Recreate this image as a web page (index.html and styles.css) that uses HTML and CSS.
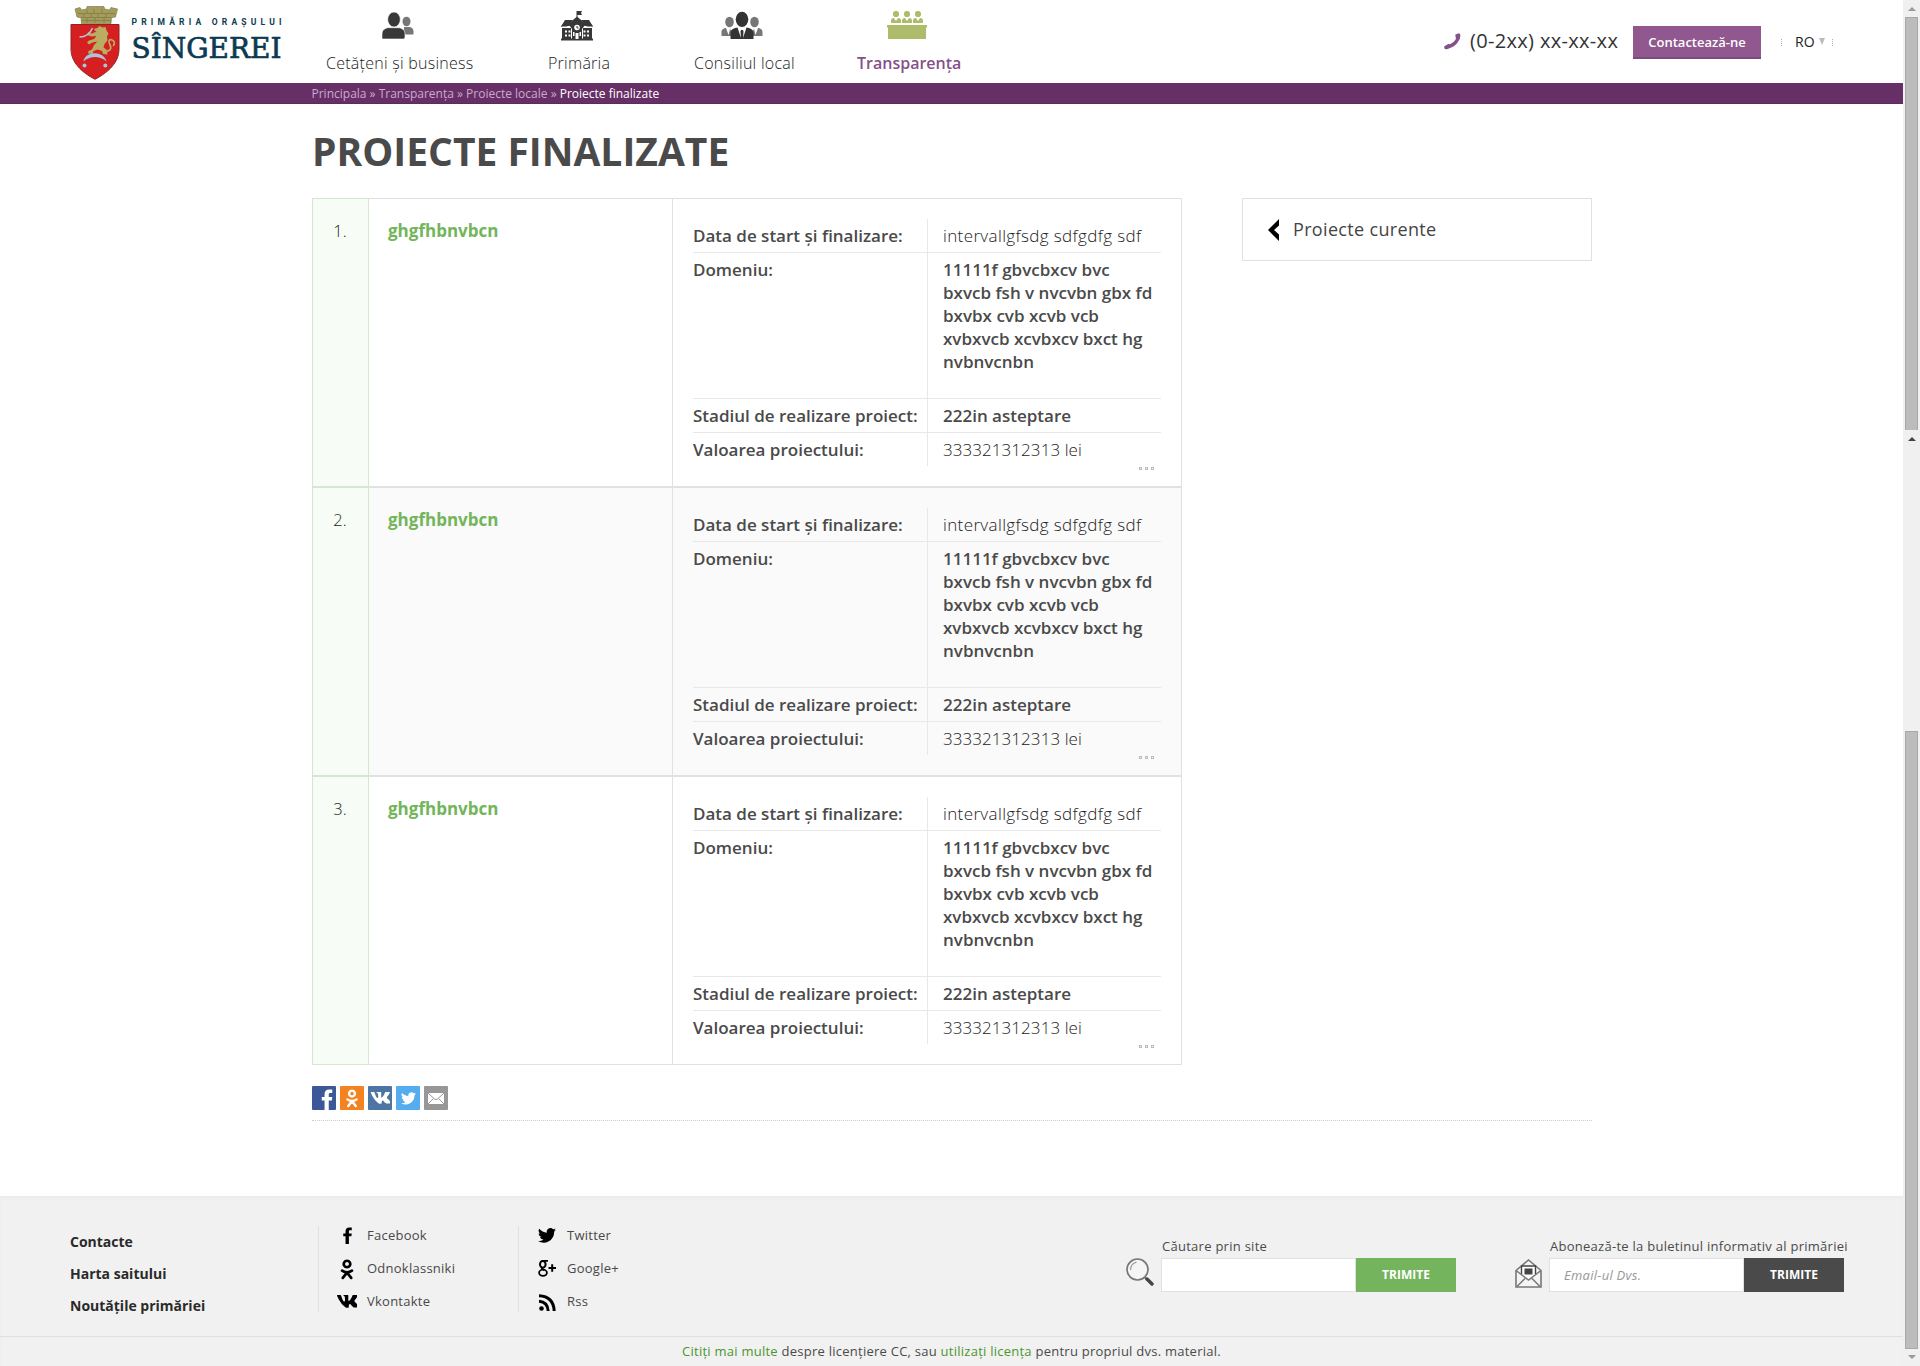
FILE: index.html
```html
<!DOCTYPE html>
<html lang="ro">
<head>
<meta charset="utf-8">
<title>Proiecte finalizate</title>
<link rel="stylesheet" href="styles.css">
<script src="main.js" defer></script>
</head>
<body>
<svg class="defs" width="0" height="0">
  <symbol id="i-fb" viewBox="0 0 12 24"><path d="M3.2 24V13.2H0V9.2h3.200V6.200C3.200 2.600 5 .6 8.600.6H12v4H9.700C8.300 4.600 8 5.200 8 6.500v2.700h4l-.5 4H8V24z"/></symbol>
  <symbol id="i-ok" viewBox="0 0 14 22"><path fill="none" stroke="currentColor" stroke-width="2.800" stroke-linecap="round" d="M7 1.800a3.400 3.400 0 1 0 .01 0zM1.800 12.200q5.200 3.400 10.400 0M7 14.200L2.600 19.800M7 14.200l4.400 5.600"/></symbol>
  <symbol id="i-vk" viewBox="0 0 20 13"><path d="M9.700 12.800h1.300s.5-.1.600-.4c.2-.3.200-1 .2-1s0-2 .9-2.300c.9-.3 2 2 3.300 2.900.9.600 1.600.5 1.600.5h3.100s1.700-.2.800-1.600c-.1-.1-.5-1-2.600-3-2.200-2-1.900-1.700.7-5.200C21.200.6 20.800 0 19.900 0h-3.600s-.3 0-.5.100c-.2.100-.3.400-.3.400s-.6 1.500-1.300 2.800c-1.600 2.700-2.200 2.800-2.500 2.600-.6-.4-.4-1.600-.4-2.400C11.300.8 11.700 0 10.500-.2 8.800-.5 6.700-.3 6 .4c-.4.300 1.200.3 1.500.9.500.8.900 4.900 0 5.200C6.700 6.900 5.500 5.300 4.100.5 4 .2 3.700 0 3.300 0H.4S-.2 0 .1.800c.1.500 2.500 5.700 5.200 8.600 2.400 2.500 4.400 3.400 4.400 3.400z"/></symbol>
  <symbol id="i-tw" viewBox="0 0 24 20"><path d="M24 2.400a10 10 0 0 1-2.800.8A5 5 0 0 0 23.300.5a10 10 0 0 1-3.100 1.200 4.900 4.900 0 0 0-8.400 4.500A14 14 0 0 1 1.700 1a4.900 4.900 0 0 0 1.500 6.600 5 5 0 0 1-2.200-.6 4.900 4.900 0 0 0 3.900 4.900 5 5 0 0 1-2.200.1 4.900 4.900 0 0 0 4.600 3.400A10 10 0 0 1 0 17.400 14 14 0 0 0 21.500 5z"/></symbol>
</svg>
<div class="page">
  <header class="header">
    <a class="logo">
      <svg width="222" height="80" viewBox="0 0 222 80">
        <path fill="#a39c5c" stroke="#77713d" stroke-width=".6" d="M5 9l5-1.500 1.500 2.500 5-1 .5-2.500h17l.5 2.500 5 1L41 7.500 47.500 9l-2 8-4 .8-.5 6H11.500l-.5-6-4-.8z"/>
        <path stroke="#857f48" stroke-width=".9" fill="none" d="M8 13.500h37M11 17.500h30M12 20.500h29M17 10v3M24 9v4M32 9v4M14 14v3M21 14v3M28 14v3M36 14v3M17 18v5M25 18v5M34 18v5"/>
        <path fill="#d61f20" stroke="#8f2523" stroke-width="1" d="M1 24.500h48V49C49 62 39 72 25 79.300 11 72 1 62 1 49z"/>
        <path fill="#b9ad63" d="M24.500 28.500l3-.5 2-2 3 1.500 3-.5 1 3.500 2 3-1.500 3 .5 4-3 3.500-1 3.500 3.500 2.500.5 4.500-4.500-.5-1-3-4.500-1.500-4 1.500-1 3-4.500-.5.500-2.500 3.500-1.500 2-4.500 3.500-3.500-5 1-3.500 2-2-2 2-2 5-1.500 2.500-3-5 .5-4.500-1.500 1-2.500 4 1 4.500-2-2-1z"/>
        <path fill="none" stroke="#b9ad63" stroke-width="1.700" d="M33 51c7 1 9-2 7-6s-1-6 2-5 3 4 1 6"/>
        <path fill="none" stroke="#b7c7d9" stroke-width="1.600" d="M9.500 37c6 0 10.500-3 13-9"/>
        <path fill="#a9c3dc" d="M13.500 61.500C15 50.500 34 50.500 36.500 61.500c-6-6-17-6-23 0z"/>
        <circle cx="14.500" cy="65.500" r="2" fill="#a9c3dc"/><circle cx="35.300" cy="65.500" r="2" fill="#a9c3dc"/>
        <text class="logo-top" x="61.500" y="25" textLength="150" lengthAdjust="spacing">PRIMĂRIA ORAȘULUI</text>
        <text class="logo-main" x="61.500" y="58" textLength="150" lengthAdjust="spacingAndGlyphs">SÎNGEREI</text>
      </svg>
    </a>
    <nav class="nav">
      <a class="nav-item">
        <svg width="32" height="32" viewBox="0 0 32 32"><g fill="#777"><ellipse cx="24.500" cy="10.500" rx="4" ry="4.800"/><path d="M22 23.500h9.500v-3c0-3-2-4.500-4.500-4.500h-5z"/></g><g fill="#383838" stroke="#fff" stroke-width=".6"><path d="M0 28v-5c0-4 3-6.300 7-6.300h9c4 0 7 2.300 7 6.300v3c0 1.500-1 2-2 2z"/><ellipse cx="12" cy="8.500" rx="6.300" ry="7.500"/></g></svg>
        <span>Cetățeni și business</span>
      </a>
      <a class="nav-item">
        <svg width="32" height="32" viewBox="0 0 32 32"><g fill="#383838"><path d="M0 27.500h32V29.500H0zM1 17h9v11H1zM22 17h9v11h-9zM11 14h10v14H11zM4 9h6l-9 6.500H0zM28 9h-6l9 6.500h1zM15.500 0h1v6h-1zM16 0h5l-1 2 1 2h-5z"/><path d="M5.500 9H12l-6 6.500H0zM26.500 9H20l6 6.500h6z"/><path d="M16 5.500L27 15h-3l-8-7-8 7H5zM8 14l8-7 8 7-3 4H11z"/></g><circle cx="16" cy="16.500" r="2.800" fill="#fff"/><path stroke="#383838" fill="none" d="M16 15v2h1.500"/><path fill="#fff" d="M4 19.500h2v2H4zM7.500 19.500h2v2h-2zM4 23.500h2v2H4zM7.500 23.500h2v2h-2zM22.500 19.500h2v2h-2zM26 19.500h2v2h-2zM22.500 23.500h2v2h-2zM26 23.500h2v2h-2zM12 21h1.500v4H12zM18.500 21H20v4h-1.500zM14.500 22h3v6h-3z"/></svg>
        <span>Primăria</span>
      </a>
      <a class="nav-item">
        <svg width="42" height="32" viewBox="0 0 42 32"><g fill="#777"><ellipse cx="8.500" cy="11" rx="4.300" ry="5.300"/><ellipse cx="33.500" cy="11" rx="4.300" ry="5.300"/><path d="M.5 25v-4c0-3 3-4 4.500-4l2.500 7L9 18l2 3v4zM41.500 25v-4c0-3-3-4-4.500-4l-2.500 7L33 18l-2 3v4z"/></g><g fill="#333"><ellipse cx="21" cy="8.300" rx="6.300" ry="7.600"/><path d="M9.500 28v-6c0-4 4-5 7-5.500L20 27l-.5-6.500.5-1.500h2l.5 1.500L22 27l3.500-10.500c3 .5 7 1.500 7 5.500v6z"/></g></svg>
        <span>Consiliul local</span>
      </a>
      <a class="nav-item active">
        <svg width="40" height="32" viewBox="0 0 40 32"><g fill="#adbc6b"><circle cx="9" cy="3" r="3.100"/><circle cx="20" cy="3" r="3.100"/><circle cx="31" cy="3" r="3.100"/><path d="M4 12V9.500q0-2.500 3-2.500l2 3 2-3q3 0 3 2.500V12zM15 12V9.500q0-2.500 3-2.500l2 3 2-3q3 0 3 2.500V12zM26 12V9.500q0-2.500 3-2.500l2 3 2-3q3 0 3 2.500V12zM0 14h40v2.500h-1V28H1V16.500H0z"/></g></svg>
        <span>Transparența</span>
      </a>
    </nav>
    <div class="tools">
      <svg width="17" height="17" viewBox="0 0 17 17"><path d="M14.500 2.500C14.200 8 9.500 13.200 2.500 13.700" fill="none" stroke="#85518a" stroke-width="3.400"/><path d="M11.300 1.500L15 .3q1.700.5 1.300 2.500L15.800 6.200l-4-.8zM.3 13.300l4.800-2.500 1.500 4L3 16.200q-2 .5-2.700-1z" fill="#85518a"/></svg>
      <span class="phone">(0-2xx) xx-xx-xx</span>
      <a class="contact">Contactează-ne</a>
      <div class="lang"><span>RO</span><i></i></div>
    </div>
  </header>
  <div class="crumbs"><a>Principala</a> » <a>Transparența</a> » <a>Proiecte locale</a> » <b>Proiecte finalizate</b></div>
  <main class="main">
    <h1>Proiecte finalizate</h1>
    <div class="cols">
      <div class="projects" id="projects"></div>
      <aside class="side"><svg width="11" height="22" viewBox="0 0 11 22"><path d="M11 0v6.500L6 11l5 4.500V22L0 11z"/></svg><span>Proiecte curente</span></aside>
    </div>
    <div class="share">
      <a class="sh fb"><svg width="12" height="21"><use href="#i-fb"/></svg></a>
      <a class="sh ok"><svg width="12" height="19"><use href="#i-ok"/></svg></a>
      <a class="sh vk"><svg width="20" height="12"><use href="#i-vk"/></svg></a>
      <a class="sh tw"><svg width="15" height="13"><use href="#i-tw"/></svg></a>
      <a class="sh ml"><svg width="16" height="11" viewBox="0 0 16 11"><path fill="#fff" d="M0 0h16v11H0z"/><path fill="none" stroke="#979797" d="M0 0l6.500 6q1.500 1 3 0L16 0M0 11l5.500-5.500M16 11l-5.500-5.500"/></svg></a>
    </div>
  </main>
  <footer class="footer">
    <div class="foot-main">
      <div class="links"><a>Contacte</a><a>Harta saitului</a><a>Noutățile primăriei</a></div>
      <div class="social">
        <a><svg class="drop-1" width="9" height="17"><use href="#i-fb"/></svg><span>Facebook</span></a>
        <a><svg width="14" height="21"><use href="#i-ok"/></svg><span>Odnoklassniki</span></a>
        <a><svg class="drop-3" width="20" height="13"><use href="#i-vk"/></svg><span>Vkontakte</span></a>
      </div>
      <div class="social">
        <a><svg class="drop-2" width="18" height="15"><use href="#i-tw"/></svg><span>Twitter</span></a>
        <a><svg class="drop-1" width="18" height="17" viewBox="0 0 18 17"><g fill="none" stroke="#000"><ellipse cx="4.800" cy="4.300" rx="2.800" ry="3.400" stroke-width="2"/><ellipse cx="5" cy="12.800" rx="3.900" ry="3.100" stroke-width="1.800"/><path stroke-width="1.800" d="M5 .9h5M4 7.300c-1 1.200 1 2 2.500 3"/><path stroke-width="2" d="M10.500 8H18M14.200 4.200v7.600"/></g></svg><span>Google+</span></a>
        <a><svg class="drop-2" width="17" height="17" viewBox="0 0 17 17"><circle cx="2.500" cy="14.500" r="2.300"/><path fill="none" stroke="#000" stroke-width="3" d="M0 7.200q8.500.5 9.200 9.800M0 1.800Q14.500 2.500 15.200 17"/></svg><span>Rss</span></a>
      </div>
      <div class="field search">
        <svg width="28" height="29" viewBox="0 0 28 29"><circle cx="11.500" cy="11.500" r="10.500" fill="#f5f5f5" stroke="#777" stroke-width="1.700"/><path d="M4.500 12q0-6 6-8" fill="none" stroke="#999" stroke-width="1.200"/><path d="M19 19.500l2 2" stroke="#777" stroke-width="2"/><path d="M21 21l5 5" stroke="#444" stroke-width="3.400" stroke-linecap="round"/></svg>
        <div><label>Căutare prin site</label><div class="row"><span class="box"></span><span class="btn">TRIMITE</span></div></div>
      </div>
      <div class="field mail">
        <svg width="27" height="31" viewBox="0 0 27 31"><path d="M1 12.500L13.500 2 26 12.500V29H1z" fill="#f4f4f4" stroke="#777" stroke-width="1.600"/><path d="M6 8h15v8.500l-7.500 6-7.500-6z" fill="#fff"/><path d="M6.500 16V8h14v8" fill="none" stroke="#444" stroke-width="1.400"/><path d="M1 12.500l12.500 9.500L26 12.500M2 28.500l8-8M25 28.500l-8-8" fill="none" stroke="#777" stroke-width="1.500"/><path d="M9.500 10.500h8v6h-8z" fill="#444"/></svg>
        <div><label>Abonează-te la buletinul informativ al primăriei</label><div class="row"><span class="box">Email-ul Dvs.</span><span class="btn dark">TRIMITE</span></div></div>
      </div>
    </div>
    <div class="legal"><p><a>Citiți mai multe</a> despre licențiere CC, sau <a>utilizați licența</a> pentru propriul dvs. material.</p></div>
  </footer>
</div>
<div class="scrollbar">
  <i class="up"></i><div class="thumb first"></div><i class="up dark"></i><div class="thumb second"></div><i class="down"></i>
</div>
</body>
</html>
```
FILE: main.js
```js
const fields = [
  ["Data de start și finalizare:", "intervallgfsdg sdfgdfg sdf", "period"],
  ["Domeniu:", "11111f gbvcbxcv bvc bxvcb fsh v nvcvbn gbx fd bxvbx cvb xcvb vcb xvbxvcb xcvbxcv bxct hg nvbnvcnbn", "strong long"],
  ["Stadiul de realizare proiect:", "222in asteptare", "strong"],
  ["Valoarea proiectului:", "333321312313 lei", ""]
];
const rows = fields.map(([k, v, c]) => `<div class="line"><dt>${k}</dt><dd class="${c}">${v}</dd></div>`).join("");
document.getElementById("projects").innerHTML = [1, 2, 3].map(n =>
  `<article class="project"><div class="num">${n}.</div><h2>ghgfhbnvbcn</h2><div class="info"><dl>${rows}</dl><div class="more"><i></i><i></i><i></i></div></div></article>`
).join("");
```
FILE: styles.css
```css
* { box-sizing: border-box; }
body { margin: 0; display: flex; height: 1366px; overflow: hidden; font-family: "Open Sans", "Noto Sans", sans-serif; font-size: 16px; color: #4a4a4a; background: #fff; }
h1, h2, p, dl, dd { margin: 0; }
.defs { position: absolute; }
svg { flex: none; display: block; }
.page { width: 1903px; display: flex; flex-direction: column; }

.header { height: 83px; display: flex; padding-left: 70px; }
.logo { width: 256px; }
.logo svg { overflow: visible; }
.logo-top { font: 700 8.500px Roboto, sans-serif; fill: #0b3a52; }
.logo-main { font: 28.500px "DejaVu Serif", serif; fill: #0b3a52; stroke: #0b3a52; stroke-width: .7px; }
.nav { display: grid; grid-template-columns: 222px 146px 163px 103px; padding-top: 11px; width: 1118px; }
.nav-item { justify-self: start; display: flex; flex-direction: column; align-items: center; font-weight: 300; line-height: 22px; white-space: nowrap; letter-spacing: .26px; color: #1c1c1c; }
.nav-item svg { position: relative; left: -2px; }
.nav-item span { margin-top: 9px; }
.nav-item.active { font-weight: 600; color: #85518a; letter-spacing: 0; }
.tools { display: flex; align-items: flex-start; white-space: nowrap; }
.tools svg { margin-top: 33px; }
.phone { font-size: 20px; line-height: 28px; width: 163px; margin: 27px 0 0 9px; letter-spacing: .33px; color: #333; }
.contact { width: 128px; height: 33px; margin-top: 26px; background: #90588f; border-bottom: 2px solid #7d4a80; color: #fff; font-weight: 600; font-size: 13px; line-height: 32px; text-align: center; }
.lang { display: flex; align-items: center; margin: 31px 0 0 20px; height: 20px; width: 52px; padding-left: 14px; font-size: 14px; color: #222; background: repeating-linear-gradient(#aaa 0 1px, transparent 1px 2px) 0 8px / 1px 7px no-repeat, repeating-linear-gradient(#aaa 0 1px, transparent 1px 2px) 51px 8px / 1px 7px no-repeat; }
.lang i { margin-left: 4px; border: 3.500px solid transparent; border-top: 7px solid #bbb; border-bottom: 0; }
.crumbs { height: 21px; background: #662f66; border-bottom: 1px solid #5c2a5c; padding-left: 311.500px; font-size: 12px; line-height: 21px; color: #cda9cf; }
.crumbs b { font-weight: 400; color: #fff; }

.main { width: 1280px; margin-left: 312px; height: 1092px; }
h1 { font-size: 39px; line-height: 54px; font-weight: 700; text-transform: uppercase; padding-top: 20px; height: 94px; }
.cols { display: flex; justify-content: space-between; align-items: flex-start; }
.projects { width: 870px; }
.project { display: grid; grid-template-columns: 57px 303px 510px; height: 289px; }
.num { background: #f7fdf6; border: 1px solid #d3e8ce; padding-top: 20px; text-align: center; font-size: 16.500px; font-weight: 300; line-height: 24px; padding-right: 1px; color: #222; }
.project h2 { border: solid #e1e1e1; border-width: 1px 0; padding: 20px 19px; font-size: 17px; line-height: 24px; font-weight: 700; color: #72b55a; }
.info { border: 1px solid #e1e1e1; padding: 20px 20px 0; }
.project:nth-child(even) h2, .project:nth-child(even) .info { background: #fafafa; }
.line { display: flex; border-bottom: 1px solid #e8e8e8; font-size: 17px; line-height: 23px; white-space: nowrap; }
.line:last-child { border: 0; }
dt { width: 234px; padding: 5px 0; font-weight: 600; }
dd { width: 234px; padding: 5px 4px 5px 15px; border-left: 1px solid #e8e8e8; white-space: normal; font-weight: 300; color: #222; letter-spacing: .06px; }
dd.strong { font-weight: 600; color: #4a4a4a; letter-spacing: 0; }
dd.long { padding-bottom: 25px; }
dd.period { letter-spacing: .37px; white-space: nowrap; }
.more { display: flex; justify-content: flex-end; gap: 3px; padding: 1px 7px 0 0; }
.more i { width: 3px; height: 3px; border: 1px solid #bbb; }
.side { width: 350px; height: 63px; border: 1px solid #e1e1e1; display: flex; align-items: center; gap: 14px; padding-left: 25px; font-size: 18px; letter-spacing: .33px; color: #444; }
.side span { margin-top: -1px; }
.share { display: flex; gap: 4px; padding-top: 21px; height: 56px; border-bottom: 1px dotted #ccc; }
.sh { width: 24px; height: 24px; border-radius: 1px; display: flex; align-items: center; justify-content: center; fill: #fff; color: #fff; }
.fb { background: #3b5998; align-items: flex-end; justify-content: flex-end; padding-right: 3px; }
.ok { background: #f58220; }
.vk { background: #4d75a3; }
.tw { background: #55acee; }
.ml { background: #979797; }

.footer { height: 170px; background: #f1f1f1; box-shadow: inset 0 2px 2px #ebebeb; }
.foot-main { height: 140px; display: flex; padding: 30px 0 0 70px; }
.links { width: 248px; display: flex; flex-direction: column; font-size: 14px; font-weight: 700; line-height: 32px; color: #2a2a2a; }
.social { width: 200px; height: 86px; border-left: 1px solid #e0e0e0; font-size: 13px; color: #555; }
.social a { display: grid; grid-template-columns: 56px auto; height: 33px; color: #000; align-items: start; justify-content: start; }
.social svg { margin: 0 auto; }
.social .drop-1 { margin-top: 1px; }
.social .drop-2 { margin-top: 2px; }
.social .drop-3 { margin-top: 3px; }
.social span { line-height: 18px; color: #484848; margin-left: -8px; letter-spacing: .25px; }
.field { display: flex; white-space: nowrap; font-size: 13px; gap: 7px; letter-spacing: .27px; }
.search { margin-left: 408px; width: 389px; }
.field > svg { margin-top: 32px; }
label { display: block; line-height: 18px; margin: 11px 0 3px 1px; }
.row { display: flex; }
.box { width: 195px; height: 34px; background: #fff; border: 1px solid #e1e1e1; padding-left: 14px; line-height: 32px; font-style: italic; color: #999; }
.btn { width: 100px; height: 34px; background: #74b45c; color: #fff; font-weight: 700; font-size: 12px; line-height: 34px; text-align: center; letter-spacing: 0; }
.btn.dark { background: #4a4a4a; }
.legal { border-top: 1px solid #e0e0e0; text-align: center; font-size: 13px; line-height: 28px; letter-spacing: .25px; }
.legal a { color: #4b962f; }

.scrollbar { width: 17px; background: #f0f0f0; display: flex; flex-direction: column; align-items: center; }
.thumb { width: 13px; background: #bcbcbc; border: 1px solid #a8a8a8; }
.first { height: 413px; border-bottom: 0; margin-top: 6px; }
.second { height: 618px; margin-top: 290px; }
.up { margin-top: 7px; border: 4px solid transparent; border-bottom-color: #999; border-top: 0; }
.up.dark { border-bottom-color: #444; }
.down { margin-top: 6px; border: 4px solid transparent; border-top-color: #999; border-bottom: 0; }
```
